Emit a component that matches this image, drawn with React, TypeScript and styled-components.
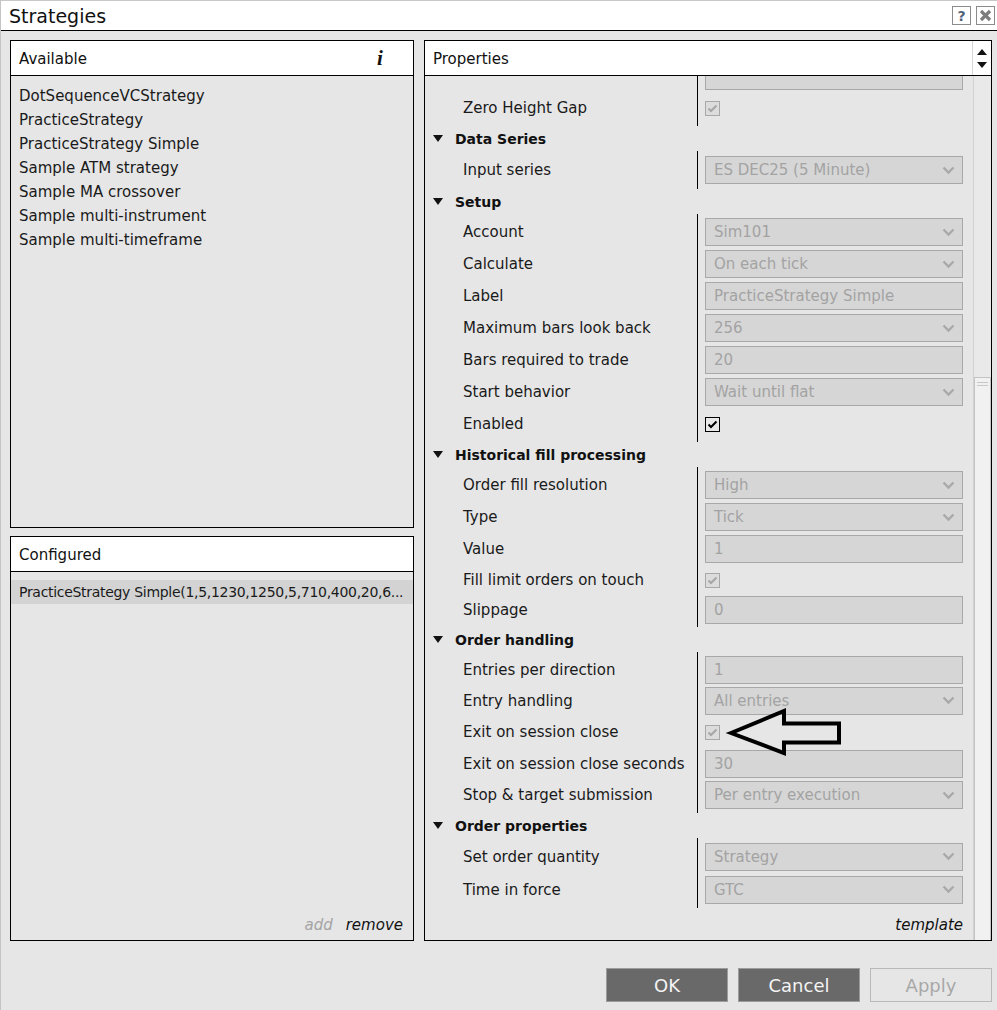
import React from "react";
import styled, { createGlobalStyle } from "styled-components";

const FONT = `"DejaVu Sans", "Liberation Sans", sans-serif`;

const GlobalStyle = createGlobalStyle`
  html, body {
    margin: 0;
    padding: 0;
    background: #e6e6e6;
  }
  body {
    font-family: ${FONT};
    font-size: 15px;
    color: #1a1a1a;
  }
`;

const Window = styled.div`
  position: relative;
  width: 997px;
  height: 1010px;
  box-sizing: border-box;
  display: flex;
  flex-direction: column;
  background: #e6e6e6;
  border-left: 1px solid #c4c4c4;
  border-top: 1px solid #c8c8c8;
  overflow: hidden;
`;

const TitleBar = styled.div`
  height: 29px;
  flex-shrink: 0;
  display: flex;
  align-items: center;
  padding: 0 2px 0 8px;
  background: #fff;
  border-bottom: 1px solid #000;
`;

const Title = styled.div`
  flex: 1;
  font-size: 19px;
  color: #111;
`;

const TitleButton = styled.div`
  width: 17px;
  height: 17px;
  margin-left: 5px;
  border: 1px solid #8c8c8c;
  background: #fff;
  display: flex;
  align-items: center;
  justify-content: center;
  font-weight: bold;
  font-size: 14px;
  color: #4f6478;
`;

const Main = styled.div`
  flex: none;
  box-sizing: border-box;
  height: 910px;
  display: flex;
  gap: 10px;
  padding: 9px 5px 0 9px;
`;

const LeftColumn = styled.div`
  width: 404px;
  flex-shrink: 0;
  display: flex;
  flex-direction: column;
  gap: 8px;
`;

const Panel = styled.div<{ $h?: number }>`
  box-sizing: border-box;
  display: flex;
  flex-direction: column;
  border: 1px solid #000;
  background: #e6e6e6;
  ${(p) => (p.$h ? `height: ${p.$h}px; flex-shrink: 0;` : "flex: 1;")}
  min-width: 0;
`;

const PanelHeader = styled.div`
  height: 34px;
  flex-shrink: 0;
  display: flex;
  align-items: center;
  background: #fff;
  border-bottom: 1px solid #000;
  padding-left: 8px;
  font-size: 15px;
  color: #111;
`;

const HeaderLabel = styled.div`
  flex: 1;
  padding-top: 2px;
`;

const InfoIcon = styled.div`
  width: 20px;
  margin-right: 23px;
  font-family: "Liberation Serif", "DejaVu Serif", serif;
  font-style: italic;
  font-weight: bold;
  font-size: 21px;
  text-align: center;
  color: #111;
`;

const List = styled.div<{ $top: number }>`
  flex: 1;
  padding-top: ${(p) => p.$top}px;
  overflow: hidden;
`;

const ListItem = styled.div<{ $selected?: boolean }>`
  height: 24px;
  line-height: 25px;
  padding: 0 8px;
  white-space: nowrap;
  overflow: hidden;
  background: ${(p) => (p.$selected ? "#d3d3d3" : "transparent")};
  ${(p) => (p.$selected ? "font-size: 14px; letter-spacing: -0.3px;" : "")}
`;

const PanelFooter = styled.div`
  height: 30px;
  flex-shrink: 0;
  display: flex;
  align-items: center;
  justify-content: flex-end;
  gap: 13px;
  padding-right: 10px;
  font-style: italic;
  font-size: 15px;
`;

const FooterLink = styled.span<{ $disabled?: boolean }>`
  color: ${(p) => (p.$disabled ? "#a4a4a4" : "#111")};
`;

/* ---------- properties panel ---------- */

const SpinColumn = styled.div`
  width: 18px;
  align-self: stretch;
  display: flex;
  flex-direction: column;
  align-items: center;
  justify-content: center;
  gap: 7px;
  border-left: 1px solid #d6d6d6;
`;

const PropsBody = styled.div`
  flex: 1;
  min-height: 0;
  display: flex;
`;

const PropsContent = styled.div`
  flex: 1;
  min-width: 0;
  display: flex;
  flex-direction: column;
`;

const PropsScroll = styled.div`
  flex: 1;
  min-height: 0;
  overflow: hidden;
`;

const PropsList = styled.div`
  margin-top: -18px;
`;

const Group = styled.div`
  padding: 2px 0;
  background: linear-gradient(#000, #000) 272px 0 / 1px 100% no-repeat;
`;

const CategoryRow = styled.div`
  height: 25px;
  display: flex;
  align-items: center;
  gap: 12px;
  padding-left: 8px;
  font-weight: bold;
  font-size: 14px;
  color: #111;
`;

const PropRow = styled.div<{ $h: number }>`
  height: ${(p) => p.$h}px;
  display: grid;
  grid-template-columns: 272px 1fr;
`;

const PropLabel = styled.div`
  display: flex;
  align-items: center;
  padding-left: 38px;
  white-space: nowrap;
  color: #1a1a1a;
`;

const PropEditor = styled.div`
  display: flex;
  align-items: center;
  padding: 0 10px 0 8px;
  min-width: 0;
`;

const Field = styled.div`
  flex: 1;
  height: 28px;
  box-sizing: border-box;
  display: flex;
  align-items: center;
  padding: 0 7px 0 8px;
  background: #d6d6d6;
  border: 1px solid #a8a8a8;
  color: #a3a3a3;
  white-space: nowrap;
  overflow: hidden;
`;

const FieldText = styled.span`
  flex: 1;
`;

const CheckBox = styled.div<{ $enabled?: boolean }>`
  width: 15px;
  height: 15px;
  box-sizing: border-box;
  border: 1px solid ${(p) => (p.$enabled ? "#000" : "#a8a8a8")};
  background: ${(p) => (p.$enabled ? "#e8e8e8" : "#dcdcdc")};
  display: flex;
  align-items: center;
  justify-content: center;
`;

const Scrollbar = styled.div`
  width: 18px;
  box-sizing: border-box;
  display: flex;
  flex-direction: column;
  background: #e9e9e9;
  border-left: 1px solid #d2d2d2;
`;

const Thumb = styled.div`
  flex: 1;
  margin-top: 301px;
  background: #f1f1f1;
  border: 1px solid #c4c4c4;
  border-bottom: none;
  padding-top: 4px;
  display: flex;
  flex-direction: column;
  align-items: center;
  gap: 2px;
`;

const Grip = styled.div`
  width: 11px;
  height: 1px;
  background: #c8c8c8;
`;

const ButtonBar = styled.div`
  flex: 1;
  display: flex;
  justify-content: flex-end;
  align-items: flex-start;
  gap: 10px;
  padding: 27px 5px 0 0;
`;

const Button = styled.div<{ $disabled?: boolean }>`
  width: 122px;
  height: 34px;
  box-sizing: border-box;
  display: flex;
  align-items: center;
  justify-content: center;
  font-size: 18px;
  border: 1px solid ${(p) => (p.$disabled ? "#b9b9b9" : "#9c9c9c")};
  background: ${(p) => (p.$disabled ? "#e6e6e6" : "#696969")};
  color: ${(p) => (p.$disabled ? "#a8a8a8" : "#f4f4f4")};
`;

const Annotation = styled.svg`
  position: absolute;
  left: 723px;
  top: 703px;
`;

/* ---------- data ---------- */

type Editor =
  | { kind: "select"; value: string }
  | { kind: "text"; value: string }
  | { kind: "check"; enabled?: boolean };

type Prop = { label: string; editor: Editor; h?: number };
type Section = { title?: string; props: Prop[] };

const sections: Section[] = [
  {
    props: [
      { label: "", editor: { kind: "text", value: "" } },
      { label: "Zero Height Gap", editor: { kind: "check" } },
    ],
  },
  {
    title: "Data Series",
    props: [
      {
        label: "Input series",
        editor: { kind: "select", value: "ES DEC25 (5 Minute)" },
        h: 34,
      },
    ],
  },
  {
    title: "Setup",
    props: [
      { label: "Account", editor: { kind: "select", value: "Sim101" } },
      { label: "Calculate", editor: { kind: "select", value: "On each tick" } },
      {
        label: "Label",
        editor: { kind: "text", value: "PracticeStrategy Simple" },
      },
      {
        label: "Maximum bars look back",
        editor: { kind: "select", value: "256" },
      },
      { label: "Bars required to trade", editor: { kind: "text", value: "20" } },
      {
        label: "Start behavior",
        editor: { kind: "select", value: "Wait until flat" },
      },
      { label: "Enabled", editor: { kind: "check", enabled: true } },
    ],
  },
  {
    title: "Historical fill processing",
    props: [
      {
        label: "Order fill resolution",
        editor: { kind: "select", value: "High" },
      },
      { label: "Type", editor: { kind: "select", value: "Tick" } },
      { label: "Value", editor: { kind: "text", value: "1" } },
      {
        label: "Fill limit orders on touch",
        editor: { kind: "check" },
        h: 30,
      },
      { label: "Slippage", editor: { kind: "text", value: "0" }, h: 30 },
    ],
  },
  {
    title: "Order handling",
    props: [
      {
        label: "Entries per direction",
        editor: { kind: "text", value: "1" },
        h: 31,
      },
      {
        label: "Entry handling",
        editor: { kind: "select", value: "All entries" },
        h: 31,
      },
      { label: "Exit on session close", editor: { kind: "check" } },
      {
        label: "Exit on session close seconds",
        editor: { kind: "text", value: "30" },
        h: 31,
      },
      {
        label: "Stop & target submission",
        editor: { kind: "select", value: "Per entry execution" },
      },
    ],
  },
  {
    title: "Order properties",
    props: [
      {
        label: "Set order quantity",
        editor: { kind: "select", value: "Strategy" },
        h: 33,
      },
      {
        label: "Time in force",
        editor: { kind: "select", value: "GTC" },
        h: 33,
      },
    ],
  },
];

const available = [
  "DotSequenceVCStrategy",
  "PracticeStrategy",
  "PracticeStrategy Simple",
  "Sample ATM strategy",
  "Sample MA crossover",
  "Sample multi-instrument",
  "Sample multi-timeframe",
];

/* ---------- small drawings ---------- */

const Chevron = () => (
  <svg width="13" height="9" viewBox="0 0 13 9">
    <polyline
      points="1.5,1.5 6.5,6.5 11.5,1.5"
      fill="none"
      stroke="#a9a9a9"
      strokeWidth="2.4"
    />
  </svg>
);

const Tick = ({ color }: { color: string }) => (
  <svg width="11" height="11" viewBox="0 0 11 11">
    <polyline
      points="1.5,5.5 4,8 9.5,2.5"
      fill="none"
      stroke={color}
      strokeWidth="2"
    />
  </svg>
);

const CategoryArrow = () => (
  <svg width="10" height="7" viewBox="0 0 10 7">
    <polygon points="0,0 10,0 5,7" fill="#111" />
  </svg>
);

const SpinArrow = ({ up }: { up?: boolean }) => (
  <svg width="10" height="6" viewBox="0 0 10 6">
    <polygon points={up ? "0,6 10,6 5,0" : "0,0 10,0 5,6"} fill="#111" />
  </svg>
);

function renderEditor(e: Editor) {
  if (e.kind === "check") {
    return (
      <CheckBox $enabled={e.enabled}>
        <Tick color={e.enabled ? "#000" : "#a6a6a6"} />
      </CheckBox>
    );
  }
  return (
    <Field>
      <FieldText>{e.value}</FieldText>
      {e.kind === "select" && <Chevron />}
    </Field>
  );
}

export default function App() {
  return (
    <>
      <GlobalStyle />
      <Window>
        <TitleBar>
          <Title>Strategies</Title>
          <TitleButton>?</TitleButton>
          <TitleButton>
            <svg width="13" height="13" viewBox="0 0 13 13">
              <path
                d="M2 2 L11 11 M11 2 L2 11"
                stroke="#7d7d7d"
                strokeWidth="3.2"
              />
            </svg>
          </TitleButton>
        </TitleBar>

        <Main>
          <LeftColumn>
            <Panel $h={488}>
              <PanelHeader>
                <HeaderLabel>Available</HeaderLabel>
                <InfoIcon>i</InfoIcon>
              </PanelHeader>
              <List $top={8}>
                {available.map((s) => (
                  <ListItem key={s}>{s}</ListItem>
                ))}
              </List>
            </Panel>

            <Panel $h={405}>
              <PanelHeader>
                <HeaderLabel>Configured</HeaderLabel>
              </PanelHeader>
              <List $top={8}>
                <ListItem $selected>
                  PracticeStrategy Simple(1,5,1230,1250,5,710,400,20,6...
                </ListItem>
              </List>
              <PanelFooter>
                <FooterLink $disabled>add</FooterLink>
                <FooterLink>remove</FooterLink>
              </PanelFooter>
            </Panel>
          </LeftColumn>

          <Panel>
            <PanelHeader>
              <HeaderLabel>Properties</HeaderLabel>
              <SpinColumn>
                <SpinArrow up />
                <SpinArrow />
              </SpinColumn>
            </PanelHeader>
            <PropsBody>
              <PropsContent>
                <PropsScroll>
                  <PropsList>
                    {sections.map((sec, i) => (
                      <React.Fragment key={i}>
                        {sec.title && (
                          <CategoryRow>
                            <CategoryArrow />
                            {sec.title}
                          </CategoryRow>
                        )}
                        <Group>
                          {sec.props.map((p, j) => (
                            <PropRow key={j} $h={p.h ?? 32}>
                              <PropLabel>{p.label}</PropLabel>
                              <PropEditor>{renderEditor(p.editor)}</PropEditor>
                            </PropRow>
                          ))}
                        </Group>
                      </React.Fragment>
                    ))}
                  </PropsList>
                </PropsScroll>
                <PanelFooter>
                  <FooterLink>template</FooterLink>
                </PanelFooter>
              </PropsContent>
              <Scrollbar>
                <Thumb>
                  <Grip />
                  <Grip />
                </Thumb>
              </Scrollbar>
            </PropsBody>
          </Panel>
        </Main>

        <ButtonBar>
          <Button>OK</Button>
          <Button>Cancel</Button>
          <Button $disabled>Apply</Button>
        </ButtonBar>

        <Annotation width="122" height="56" viewBox="0 0 122 56">
          <path
            d="M7 29 L60 7 L60 19.5 L115 19.5 L115 38.5 L60 38.5 L60 49 Z"
            fill="none"
            stroke="#000"
            strokeWidth="4"
            strokeLinejoin="miter"
          />
        </Annotation>
      </Window>
    </>
  );
}
